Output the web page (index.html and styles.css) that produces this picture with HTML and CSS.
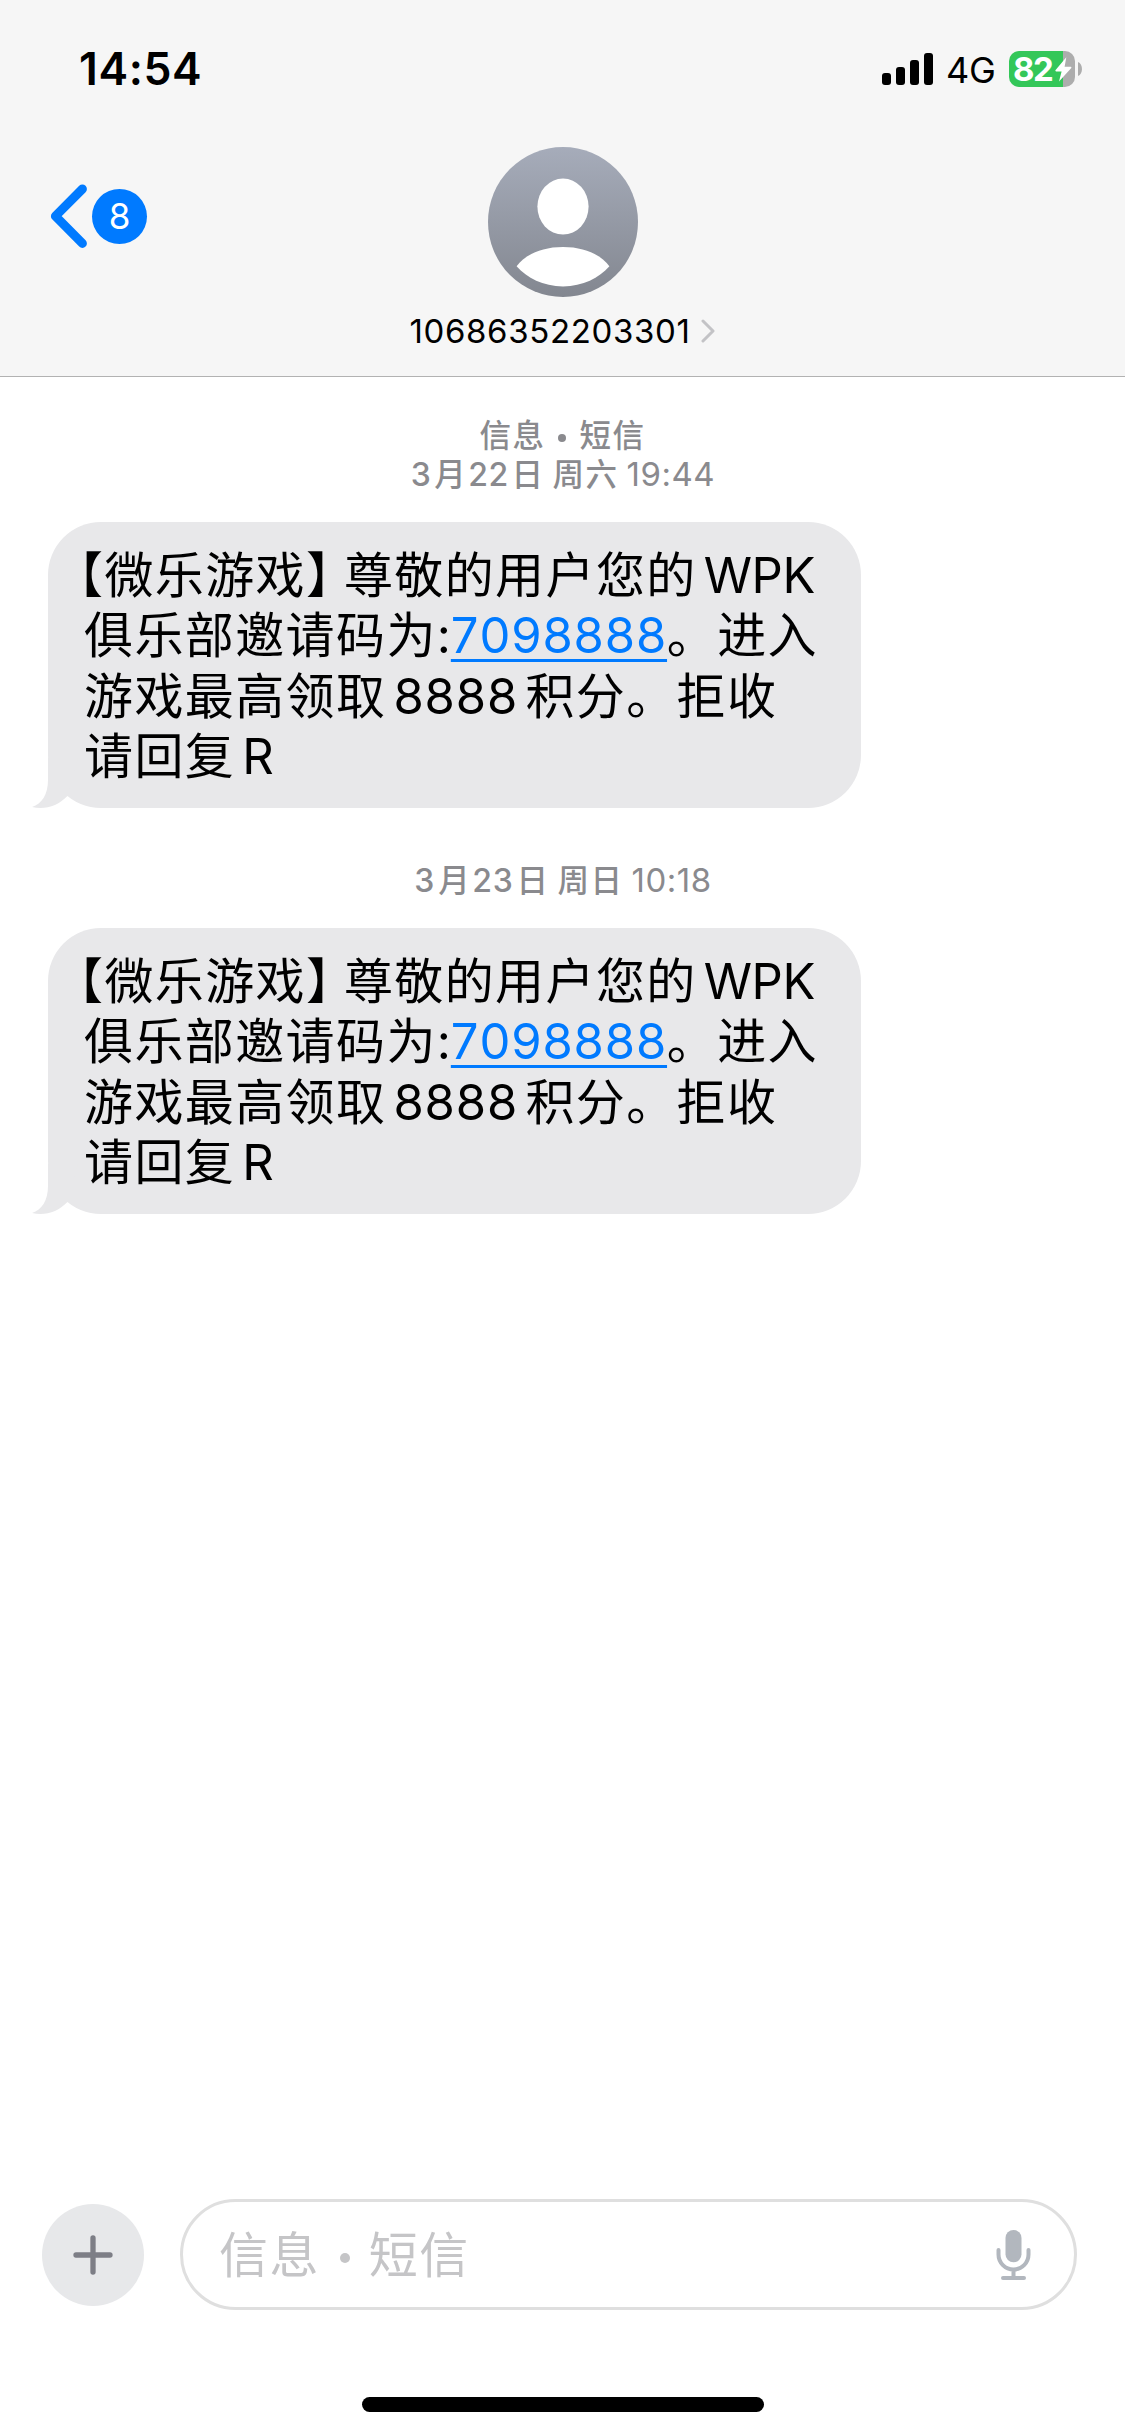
FILE: index.html
```html
<!DOCTYPE html>
<html lang="zh-CN">
<head>
<meta charset="utf-8">
<title>10686352203301</title>
<link rel="stylesheet" href="styles.css">
</head>
<body>
<div class="screen">
  <header class="header">
    <div class="status">
      <span class="clock">14:54</span>
      <div class="status-right">
        <svg class="signal" width="51" height="32" viewBox="0 0 51 32">
          <rect x="0" y="20" width="9" height="12" rx="3"/>
          <rect x="14" y="14" width="9" height="18" rx="3"/>
          <rect x="28" y="7" width="9" height="25" rx="3"/>
          <rect x="42" y="0" width="9" height="32" rx="3"/>
        </svg>
        <span class="network">4G</span>
        <div class="battery">
          <span class="level">82</span>
          <svg class="bolt" width="17" height="25" viewBox="0 0 17 25"><path d="M11.3 .3 L.4 13.3 Q0 14.4 1.2 14.4 H6.6 L4 24.6 L16.3 11 Q16.8 9.8 15.6 9.8 H9.6 Z"/></svg>
          <svg class="nub" width="4" height="14" viewBox="0 0 4 14"><path d="M0 0C5.3 2 5.3 12 0 14Z"/></svg>
        </div>
      </div>
    </div>
    <nav class="nav">
      <div class="back">
        <svg width="38" height="64" viewBox="0 0 38 64"><path d="M32.4 5 L5.4 32.2 L32.4 59.4"/></svg>
        <span class="badge">8</span>
      </div>
      <div class="contact">
        <svg class="avatar" width="150" height="150" viewBox="0 0 150 150">
          <defs><linearGradient id="sky" x1="0" y1="0" x2="0" y2="1"><stop offset="0" stop-color="#a6acba"/><stop offset="1" stop-color="#838790"/></linearGradient></defs>
          <circle cx="75" cy="75" r="75" fill="url(#sky)"/>
          <ellipse cx="75" cy="59.6" rx="25.6" ry="28" fill="#fff"/>
          <path d="M28.6 119.3C37 108 53 100 75 100S113 108 121.4 119.3C111 131 95 139.4 75 139.4S39 131 28.6 119.3Z" fill="#fff"/>
        </svg>
        <div class="number"><span>10686352203301</span><svg width="15" height="24" viewBox="0 0 15 24"><path d="M2 2 L12 12 L2 22"/></svg></div>
      </div>
    </nav>
  </header>

  <main class="thread">
    <div class="stamp">
      <div class="service"><span>信息</span><i class="dot"></i><span>短信</span></div>
      <div class="date"><b class="n">3</b><b>月</b><b class="n">22</b><b class="day">日</b><b class="week">周六</b><span>19:44</span></div>
    </div>
    <div class="bubble">
      <p><span class="zh open">【微乐游戏</span><span class="zh close">】</span><span class="zh">尊敬的用户您的</span><span class="lat wpk">WPK</span></p>
      <p><span class="zh">俱乐部邀请码为</span><span class="lat colon">:</span><a class="link">7098888</a><span class="zh">。进入</span></p>
      <p><span class="zh">游戏最高领取</span><span class="lat points">8888</span><span class="zh">积分。拒收</span></p>
      <p><span class="zh">请回复</span><span class="lat reply">R</span></p>
      <svg class="tail" width="50" height="50" viewBox="0 0 50 50"><path d="M16 0V22C16 36 10 46 0 49C13 52 26 48 35.7 37.7L46 0Z"/></svg>
    </div>
    <div class="stamp second">
      <div class="date"><b class="n">3</b><b>月</b><b class="n">23</b><b class="day">日</b><b class="week">周日</b><span>10:18</span></div>
    </div>
    <div class="bubble">
      <p><span class="zh open">【微乐游戏</span><span class="zh close">】</span><span class="zh">尊敬的用户您的</span><span class="lat wpk">WPK</span></p>
      <p><span class="zh">俱乐部邀请码为</span><span class="lat colon">:</span><a class="link">7098888</a><span class="zh">。进入</span></p>
      <p><span class="zh">游戏最高领取</span><span class="lat points">8888</span><span class="zh">积分。拒收</span></p>
      <p><span class="zh">请回复</span><span class="lat reply">R</span></p>
      <svg class="tail" width="50" height="50" viewBox="0 0 50 50"><path d="M16 0V22C16 36 10 46 0 49C13 52 26 48 35.7 37.7L46 0Z"/></svg>
    </div>
  </main>

  <footer class="composer">
    <div class="row">
      <div class="add"><svg width="40" height="40" viewBox="0 0 40 40"><path d="M20 3V37M3 20H37"/></svg></div>
      <div class="field">
        <div class="hint"><span>信息</span><i class="dot"></i><span>短信</span></div>
        <svg class="mic" width="36" height="52" viewBox="0 0 36 52">
          <rect x="9.5" y="1" width="16" height="32.3" rx="8"/>
          <path d="M2.5 21V25.5A15 15 0 0 0 32.5 25.5V21M17.5 41V48M7 49H28"/>
        </svg>
      </div>
    </div>
    <div class="home"></div>
  </footer>
</div>
</body>
</html>
```
FILE: styles.css
```css
* { box-sizing: border-box; margin: 0; padding: 0; }
body { background: #fff; font-family: Inter, "Noto Sans CJK SC", sans-serif; color: #000; }
svg { display: block; flex: none; }
i, b { font-style: normal; font-weight: inherit; }
.screen { width: 1125px; height: 2436px; display: flex; flex-direction: column; overflow: hidden; text-spacing-trim: space-all; font-kerning: none; }

.header { height: 377px; background: #f6f6f6; border-bottom: 1px solid #b2b2b2; flex: none; }
.status { height: 138px; display: flex; justify-content: space-between; align-items: flex-start; padding: 0 43px 0 79px; }
.clock { font-size: 44.5px; font-weight: 600; line-height: 60px; margin-top: 39px; letter-spacing: .6px; }
.status-right { display: flex; align-items: flex-start; }
.signal { margin: 53px 13px 0 0; }
.network { font-size: 36px; line-height: 50px; width: 63px; margin-top: 45px; letter-spacing: -.2px; }
.battery { position: relative; width: 66px; height: 36px; margin: 51px 7px 0 0; border-radius: 10px; background: linear-gradient(90deg, #34c759 54px, #adadad 54px); display: flex; align-items: center; padding-left: 4px; }
.level { color: #fff; font-size: 33px; font-weight: 700; line-height: 36px; width: 42px; letter-spacing: -1.6px; }
.bolt { fill: #fff; }
.nub { position: absolute; left: 69px; top: 11px; fill: #adadad; }
.nav { display: grid; grid-template-columns: 1fr auto 1fr; padding-top: 9px; }
.back { display: flex; align-items: center; gap: 4px; padding-left: 50px; height: 64px; margin-top: 37px; }
.back path { fill: none; stroke: #007aff; stroke-width: 9; stroke-linecap: round; stroke-linejoin: round; }
.badge { width: 55px; height: 55px; border-radius: 50%; background: #007aff; color: #fff; font-size: 35px; line-height: 55px; text-align: center; }
.contact { display: flex; flex-direction: column; align-items: center; }
.number { display: flex; align-items: center; gap: 10px; height: 44px; margin-top: 12px; font-size: 33px; line-height: 44px; letter-spacing: .65px; }
.number path { fill: none; stroke: #c3c3c6; stroke-width: 3; stroke-linecap: round; stroke-linejoin: round; }

.thread { flex: 1; }
.stamp { height: 145px; padding-top: 39px; color: #8a8a8e; font-size: 33px; line-height: 39px; display: flex; flex-direction: column; align-items: center; }
.service { display: flex; font-weight: 500; font-size: 31.5px; letter-spacing: 1.5px; }
.service .dot { width: 8px; height: 8px; border-radius: 50%; background: #8a8a8e; margin: 18px 14px 0 12px; }
.date { display: flex; white-space: pre; }
.date b { font-weight: 500; font-size: 31.5px; letter-spacing: 1.5px; }
.date .n { font-size: 32px; letter-spacing: .4px; padding: 0 3px 0 1px; }
.date .week { padding-left: 8px; }
.date span { padding-left: 8px; letter-spacing: .5px; }
.second { height: 120px; padding-top: 53px; }
.second .n { letter-spacing: .8px; }

.bubble { position: relative; width: 813px; height: 286px; margin-left: 48px; padding: 24px 0 0 36px; background: #e8e8ea; border-radius: 53px; font-size: 49px; line-height: 60px; }
.bubble p { display: flex; white-space: nowrap; height: 60.3px; }
.zh { font-size: 49px; letter-spacing: 1.4px; }
.open, .close { font-feature-settings: "halt"; }
.open { margin-left: -5.5px; }
.close { margin-right: 12px; }
.lat { display: block; }
.wpk { padding-left: 7px; letter-spacing: -.4px; }
.colon { width: 14px; }
.link { width: 216px; letter-spacing: .85px; color: #007aff; text-decoration: underline; text-decoration-thickness: 3px; text-underline-offset: 6px; text-decoration-skip-ink: none; }
.points { width: 139px; padding-left: 7px; letter-spacing: .85px; }
.reply { padding-left: 7px; }
.tail { position: absolute; left: -16px; bottom: 0; fill: #e8e8ea; }

.composer { flex: none; height: 237px; }
.row { display: flex; align-items: center; gap: 36px; height: 111px; padding: 0 48px 0 42px; }
.add { width: 102px; height: 102px; border-radius: 50%; background: #e7e8ea; display: flex; align-items: center; justify-content: center; }
.add path { fill: none; stroke: #7d7e86; stroke-width: 5.3; stroke-linecap: round; }
.field { flex: 1; height: 111px; border: 3px solid #dfdfdf; border-radius: 56px; display: flex; align-items: center; justify-content: space-between; padding: 0 42px 0 36px; }
.hint { display: flex; font-size: 49px; line-height: 60px; letter-spacing: 1.4px; color: #c5c5c7; padding-top: 3px; }
.hint .dot { width: 10px; height: 10px; border-radius: 50%; background: #c5c5c7; margin: 27px 19px 0 20px; }
.mic { fill: #b2b7be; }
.mic path { fill: none; stroke: #b2b7be; stroke-width: 4; stroke-linecap: round; }
.home { width: 402px; height: 15px; border-radius: 8px; background: #000; margin: 87px auto 0; }
```
